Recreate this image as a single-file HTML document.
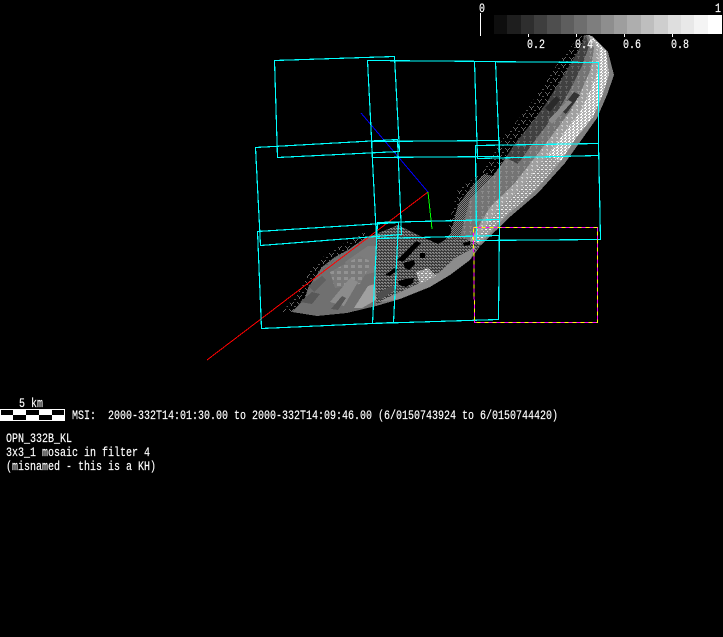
<!DOCTYPE html>
<html><head><meta charset="utf-8"><style>
html,body{margin:0;padding:0;background:#000;width:723px;height:637px;overflow:hidden}
svg{display:block}
text{font-family:"Liberation Mono",monospace;font-size:12.5px;fill:#fff;stroke:#fff;stroke-width:.15px}
</style></head><body>
<svg width="723" height="637" viewBox="0 0 723 637" xmlns="http://www.w3.org/2000/svg" shape-rendering="crispEdges">
<defs>
<pattern id="sp" width="8" height="7" patternUnits="userSpaceOnUse"><rect x="1" y="1" width="1" height="1" fill="#666"/><rect x="2" y="2" width="1" height="1" fill="#666"/><rect x="3" y="3" width="1" height="2" fill="#666"/><rect x="5" y="1" width="1" height="1" fill="#666"/><rect x="4" y="2" width="1" height="1" fill="#666"/><rect x="6" y="5" width="2" height="1" fill="#555"/></pattern>
<pattern id="ck" width="2" height="2" patternUnits="userSpaceOnUse"><rect width="2" height="2" fill="#333"/><rect width="1" height="1" fill="#808080"/><rect x="1" y="1" width="1" height="1" fill="#808080"/></pattern>
<pattern id="ck2" width="3" height="3" patternUnits="userSpaceOnUse"><rect width="3" height="3" fill="#3a3a3a"/><rect width="2" height="1" fill="#888"/><rect x="1" y="1" width="2" height="1" fill="#777"/></pattern>
<pattern id="dk" width="6" height="5" patternUnits="userSpaceOnUse"><rect width="6" height="5" fill="#404040"/><rect x="1" y="1" width="3" height="1" fill="#606060"/><rect x="2" y="2" width="1" height="2" fill="#606060"/></pattern>
<pattern id="md" width="6" height="5" patternUnits="userSpaceOnUse"><rect width="6" height="5" fill="#747474"/><rect x="1" y="1" width="3" height="1" fill="#8c8c8c"/><rect x="2" y="2" width="1" height="2" fill="#8c8c8c"/></pattern>
<pattern id="lt" width="5" height="4" patternUnits="userSpaceOnUse"><rect width="5" height="4" fill="#a0a0a0"/><rect x="1" y="1" width="2" height="1" fill="#ccc"/><rect x="2" y="2" width="1" height="1" fill="#ccc"/></pattern>
<pattern id="wh" width="4" height="3" patternUnits="userSpaceOnUse"><rect width="4" height="3" fill="#b4b4b4"/><rect x="0" y="0" width="2" height="1" fill="#fff"/><rect x="2" y="1" width="1" height="1" fill="#fff"/><rect x="1" y="2" width="1" height="1" fill="#fff"/></pattern>
<pattern id="wh2" width="4" height="4" patternUnits="userSpaceOnUse"><rect width="4" height="4" fill="#999"/><rect x="1" y="1" width="2" height="1" fill="#f4f4f4"/><rect x="3" y="3" width="1" height="1" fill="#e0e0e0"/></pattern>
<pattern id="cell" width="7" height="6" patternUnits="userSpaceOnUse"><rect width="7" height="6" fill="#7a7a7a"/><rect x="1" y="1" width="4" height="3" fill="#929292"/></pattern>
</defs>

<!-- colour bar -->
<rect x="494" y="15" width="14" height="19" fill="#0e0e0e"/><rect x="507" y="15" width="14" height="19" fill="#1e1e1e"/><rect x="521" y="15" width="13" height="19" fill="#2e2e2e"/><rect x="534" y="15" width="13" height="19" fill="#3e3e3e"/><rect x="547" y="15" width="14" height="19" fill="#4e4e4e"/><rect x="561" y="15" width="13" height="19" fill="#5e5e5e"/><rect x="574" y="15" width="13" height="19" fill="#6e6e6e"/><rect x="587" y="15" width="14" height="19" fill="#7e7e7e"/><rect x="601" y="15" width="13" height="19" fill="#8e8e8e"/><rect x="614" y="15" width="13" height="19" fill="#9e9e9e"/><rect x="627" y="15" width="14" height="19" fill="#aeaeae"/><rect x="641" y="15" width="13" height="19" fill="#bebebe"/><rect x="654" y="15" width="14" height="19" fill="#cecece"/><rect x="668" y="15" width="13" height="19" fill="#dedede"/><rect x="681" y="15" width="13" height="19" fill="#e8e8e8"/><rect x="694" y="15" width="14" height="19" fill="#f4f4f4"/><rect x="708" y="15" width="14" height="19" fill="#fff"/>
<rect x="480" y="13" width="1" height="23" fill="#fff"/>
<rect x="528" y="34" width="1" height="3" fill="#fff"/><rect x="576" y="34" width="1" height="3" fill="#fff"/><rect x="624" y="34" width="1" height="3" fill="#fff"/><rect x="672" y="34" width="1" height="3" fill="#fff"/>

<!-- surface lower lobe -->
<polygon fill="#707070" points="292,312 305,298 308,288 322,267 335,257 348,250 365,238 376,234 376,306 347,313 317,316"/>
<polygon fill="url(#ck2)" points="376,234 398,225 418,235 438,244 445,240 452,232 458,215 481,245 470,260 450,275 430,287 400,299 376,306"/>
<polygon fill="#7a7a7a" points="376,304 400,296 430,284 450,272 470,257 481,245 470,260 450,275 430,287 400,299 376,306"/>
<polygon fill="url(#sp)" points="282,312 300,290 310,270 325,255 345,243 365,232 365,240 335,260 315,280 305,300 292,312"/>
<polygon fill="#7c7c7c" points="345,262 368,246 376,246 376,272 352,278"/>
<polygon fill="url(#cell)" points="330,272 360,256 372,262 360,284 335,288"/>
<polygon fill="#a0a0a0" points="354,308 368,286 375,284 376,300 362,308"/>
<polygon fill="#8c8c8c" points="330,302 350,278 358,282 344,306"/>
<polygon fill="#585858" points="331,309 342,296 346,298 338,310"/>
<polygon fill="#585858" points="300,302 312,292 320,294 312,304"/>
<polygon fill="#606060" points="308,286 322,276 326,280 314,292"/>
<polygon fill="#4e4e4e" points="376,294 392,286 398,288 380,300"/>
<polygon fill="#8c8c8c" points="378,302 420,283 440,272 455,258 470,250 476,246 470,260 450,275 430,287 400,299"/>
<polygon fill="url(#wh2)" points="416,272 428,268 436,276 420,284"/>
<!-- holes -->
<polygon fill="#000" points="397,260 416,241 421,243 403,262"/>
<polygon fill="#000" points="403,263 414,260 415,264 409,270 405,268"/>
<polygon fill="#000" points="385,275 396,267 398,270 390,276"/>
<polygon fill="#000" points="398,281 406,279 414,278 413,283 406,287 399,285"/>
<rect x="420" y="253" width="5" height="5" fill="#000"/>
<polygon fill="#000" points="463,243 470,241 470,245 464,246"/>

<!-- upper arm bands -->
<polygon fill="url(#sp)" points="448,228 458,188 472,180 482,172 498,147 505,135 522,115 535,98 547,80 560,60 575,42 582,35 584,35 582,44 571,63 559,83 547,102 534,120 517,141 493,176 470,199 460,237 455,235"/>
<polygon fill="url(#ck)" points="450,236 458,205 474,184 484,174 493,176 470,199 460,237 455,240"/>
<polygon fill="url(#dk)" points="460,237 470,199 493,176 517,141 534,120 547,102 559,83 571,63 582,44 584,35 586,35 589,46 582,66 572,86 561,106 546,126 530,147 506,181 481,204 466,239"/>
<polygon fill="url(#md)" points="460,237 470,199 493,176 506,158 518,164 506,181 481,204 466,239"/>
<polygon fill="url(#md)" points="466,239 481,204 506,181 530,147 546,126 561,106 572,86 582,66 589,46 586,35 588,35 594,48 591,69 582,89 571,110 556,130 540,151 514,184 490,207 470,241"/>
<polygon fill="url(#lt)" points="470,241 490,207 514,184 540,151 556,130 571,110 582,89 591,69 594,48 588,35 589,35 599,49 598,71 590,91 580,112 564,133 548,155 522,187 497,210 474,242"/>
<polygon fill="url(#wh2)" points="474,242 497,210 522,187 548,155 561,161 534,192 507,215 479,244"/>
<polygon fill="url(#wh)" points="548,155 564,133 580,112 590,91 598,71 599,49 589,35 591,36 606,51 609,74 603,94 593,117 576,138 561,161"/>
<polygon fill="#808080" points="479,244 507,215 534,192 561,161 576,138 593,117 603,94 609,74 606,51 591,36 592,36 608,52 614,75 607,95 597,118 580,142 565,163 538,193 511,216 481,245"/>
<polygon fill="#333" points="560,110 574,92 580,95 566,114"/>
<polygon fill="#8a8a8a" points="548,120 568,100 572,102 552,124"/>
<polygon fill="#2a2a2a" points="545,108 556,96 560,100 550,112"/>

<!-- axes -->
<g fill="none" stroke-width="1">
<line x1="207" y1="360" x2="428" y2="192" stroke="#f00"/>
<line x1="428" y1="192" x2="432" y2="229" stroke="#0f0"/>
<line x1="361" y1="113" x2="428" y2="192" stroke="#00f"/>
</g>

<!-- frames -->
<g fill="none" stroke="#0ff" stroke-width="1.15">
<polygon points="274.5,60.5 394.5,56.5 399.5,151.5 277.5,157.5"/>
<polygon points="367.5,60.5 495.5,61.5 499.5,156.5 372.5,157.5"/>
<polygon points="474.5,61.5 598.5,62.5 598.5,155.5 477.5,158.5"/>
<polygon points="255.5,147.5 397.5,139.5 401.5,234.5 260.5,245.5"/>
<polygon points="371.5,141.5 499.5,140.5 499.5,235.5 376.5,238.5"/>
<polygon points="475.5,145.5 598.5,143.5 600.5,239.5 476.5,240.5"/>
<polygon points="257.5,231.5 398.5,222.5 393.5,322.5 261.5,328.5"/>
<polygon points="377.5,222.5 499.5,219.5 498.5,319.5 372.5,323.5"/>
</g>
<g fill="none" stroke-width="1">
<polygon points="473.5,227.5 597.5,227.5 597.5,322.5 474.5,322.5" stroke="#f0f"/>
<polygon points="473.5,227.5 597.5,227.5 597.5,322.5 474.5,322.5" stroke="#ff0" stroke-dasharray="4 4"/>
</g>

<!-- scale bar -->
<rect x="0" y="409" width="65" height="12" fill="#fff"/>
<rect x="1" y="410" width="12" height="5" fill="#000"/><rect x="26" y="410" width="13" height="5" fill="#000"/><rect x="52" y="410" width="12" height="5" fill="#000"/>
<rect x="13" y="415" width="13" height="5" fill="#000"/><rect x="39" y="415" width="13" height="5" fill="#000"/>

<!-- text -->
<g shape-rendering="auto">
<text x="479" y="12" textLength="6" lengthAdjust="spacingAndGlyphs">0</text>
<text x="715" y="12" textLength="6" lengthAdjust="spacingAndGlyphs">1</text>
<text x="527" y="48" textLength="18" lengthAdjust="spacingAndGlyphs">0.2</text>
<text x="575" y="48" textLength="18" lengthAdjust="spacingAndGlyphs">0.4</text>
<text x="623" y="48" textLength="18" lengthAdjust="spacingAndGlyphs">0.6</text>
<text x="671" y="48" textLength="18" lengthAdjust="spacingAndGlyphs">0.8</text>
<text x="19" y="407" textLength="24" lengthAdjust="spacingAndGlyphs">5 km</text>
<text x="72" y="419" xml:space="preserve" textLength="486" lengthAdjust="spacingAndGlyphs">MSI:  2000-332T14:01:30.00 to 2000-332T14:09:46.00 (6/0150743924 to 6/0150744420)</text>
<text x="6" y="442" textLength="66" lengthAdjust="spacingAndGlyphs">OPN_332B_KL</text>
<text x="6" y="456" textLength="144" lengthAdjust="spacingAndGlyphs">3x3_1 mosaic in filter 4</text>
<text x="6" y="470" textLength="150" lengthAdjust="spacingAndGlyphs">(misnamed - this is a KH)</text>
</g>
</svg>
</body></html>
